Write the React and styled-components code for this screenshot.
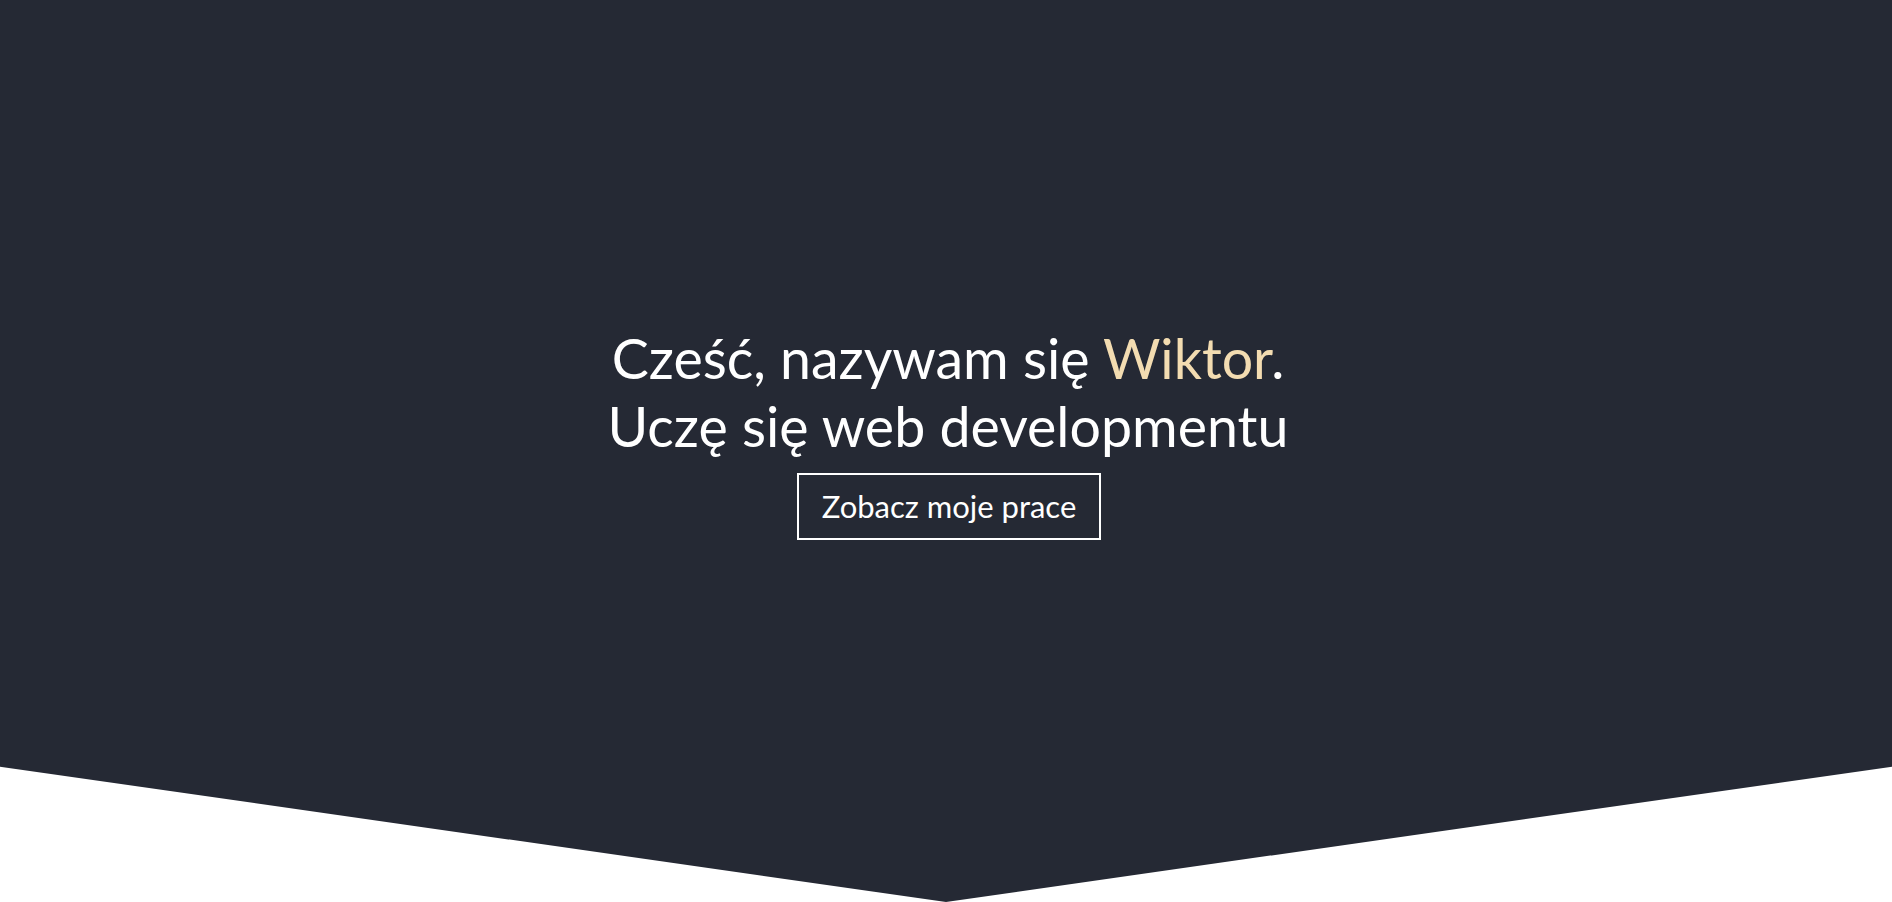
import React from "react";
import styled, { createGlobalStyle } from "styled-components";

const GlobalStyle = createGlobalStyle`
  * { box-sizing: border-box; }
  html, body { margin: 0; padding: 0; background: #ffffff; }
  body { font-family: Lato, "Noto Sans", sans-serif; }
`;

const Hero = styled.section`
  height: 100vh;
  background: #252934;
  clip-path: polygon(0 0, 100% 0, 100% 85%, 50% 100%, 0 85%);
  display: flex;
  flex-direction: column;
  align-items: center;
  justify-content: center;
  padding-bottom: 38px;
  color: #ffffff;
`;

const Title = styled.h1`
  margin: 0 0 0 4px;
  font-family: Lato, sans-serif;
  font-weight: 400;
  font-size: 55.5px;
  line-height: 68px;
  text-align: center;
`;

const Highlight = styled.span`
  color: #f3dcb1;
`;

const Button = styled.a`
  margin-top: 13px;
  margin-left: 6px;
  display: inline-block;
  border: 2px solid #ffffff;
  padding: 13px 23px;
  font-family: Lato, sans-serif;
  font-size: 31px;
  line-height: 37px;
  color: #ffffff;
  text-decoration: none;
  cursor: pointer;
`;

export default function App() {
  return (
    <>
      <GlobalStyle />
      <Hero>
        <Title>
          Cześć, nazywam się <Highlight>Wiktor</Highlight>.
          <br />
          Uczę się web developmentu
        </Title>
        <Button>Zobacz moje prace</Button>
      </Hero>
    </>
  );
}
